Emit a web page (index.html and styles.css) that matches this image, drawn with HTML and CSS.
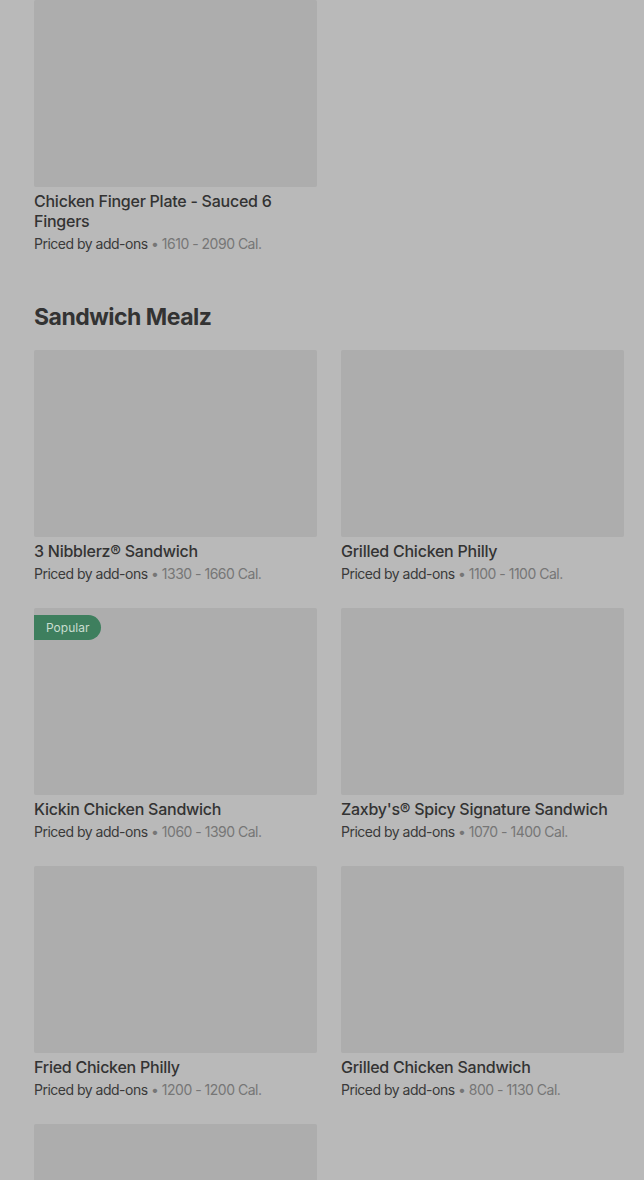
FILE: index.html
```html
<!DOCTYPE html>
<html lang="en">
<head>
  <meta charset="UTF-8" />
  <meta name="viewport" content="width=device-width, initial-scale=1.0"/>
  <title>Menu</title>
  <link rel="stylesheet" href="styles.css">
</head>
<body>

  <div class="page">
    <section class="section">
      <div class="grid">
        <div class="card">
          <div class="card-img"></div>
          <div class="card-title">Chicken Finger Plate - Sauced 6 Fingers</div>
          <div class="card-meta">Priced by add-ons <span class="cal">• 1610 - 2090 Cal.</span></div>
        </div>
      </div>
    </section>

    <section class="section">
      <h2 class="section-title">Sandwich Mealz</h2>
      <div class="grid">
        <div class="card">
          <div class="card-img"></div>
          <div class="card-title">3 Nibblerz® Sandwich</div>
          <div class="card-meta">Priced by add-ons <span class="cal">• 1330 - 1660 Cal.</span></div>
        </div>
        <div class="card">
          <div class="card-img"></div>
          <div class="card-title">Grilled Chicken Philly</div>
          <div class="card-meta">Priced by add-ons <span class="cal">• 1100 - 1100 Cal.</span></div>
        </div>
        <div class="card">
          <div class="card-img">
            <span class="badge">Popular</span>
          </div>
          <div class="card-title">Kickin Chicken Sandwich</div>
          <div class="card-meta">Priced by add-ons <span class="cal">• 1060 - 1390 Cal.</span></div>
        </div>
        <div class="card">
          <div class="card-img"></div>
          <div class="card-title">Zaxby's® Spicy Signature Sandwich</div>
          <div class="card-meta">Priced by add-ons <span class="cal">• 1070 - 1400 Cal.</span></div>
        </div>
        <div class="card">
          <div class="card-img"></div>
          <div class="card-title">Fried Chicken Philly</div>
          <div class="card-meta">Priced by add-ons <span class="cal">• 1200 - 1200 Cal.</span></div>
        </div>
        <div class="card">
          <div class="card-img"></div>
          <div class="card-title">Grilled Chicken Sandwich</div>
          <div class="card-meta">Priced by add-ons <span class="cal">• 800 - 1130 Cal.</span></div>
        </div>
        <div class="card">
          <div class="card-img"></div>
        </div>
      </div>
    </section>
  </div>

</body>
</html>
```

FILE: styles.css
```css
body {
  margin: 0;
  font-family: Inter, 'Noto Sans', sans-serif;
  background: #b9b9b9;
  color: #333;
  overflow: hidden;
}

.page {
  padding: 0 20px 0 34px;
}

.section {
  margin-bottom: 47px;
}

.section-title {
  margin: 0 0 17px;
  font-size: 23px;
  line-height: 32px;
  font-weight: 700;
  letter-spacing: -0.5px;
  color: #333;
}

.grid {
  display: grid;
  grid-template-columns: 1fr 1fr;
  column-gap: 24px;
  row-gap: 24px;
}

.card-img {
  position: relative;
  height: 187px;
  background: #adadad;
  border-radius: 2px;
}

.badge {
  position: absolute;
  top: 7px;
  left: 0;
  padding: 0 12px;
  height: 25px;
  line-height: 25px;
  font-size: 12px;
  color: #c9ddd0;
  background: #3e7f5e;
  border-radius: 0 13px 13px 0;
}

.card-title {
  margin-top: 4px;
  font-size: 16px;
  line-height: 20px;
  font-weight: 500;
  color: #333;
  letter-spacing: -0.25px;
}

.card-meta {
  margin-top: 3px;
  font-size: 14px;
  line-height: 20px;
  color: #3a3a3a;
  letter-spacing: -0.5px;
}

.cal {
  color: #767676;
}
```
